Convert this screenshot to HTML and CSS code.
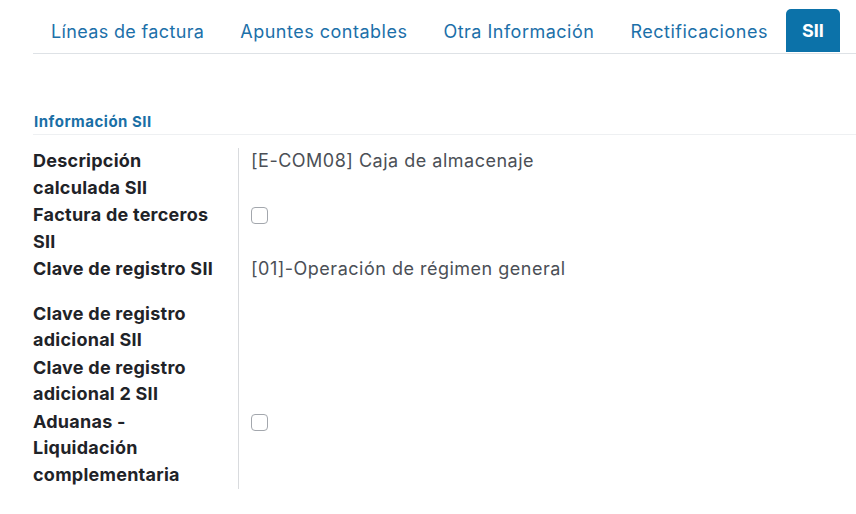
FILE: index.html
```html
<!DOCTYPE html>
<html lang="es">
<head>
<meta charset="utf-8">
<title>SII</title>
<link rel="stylesheet" href="styles.css">
</head>
<body>
<div class="sheet">
  <ul class="tabs">
    <li class="tab">Líneas de factura</li>
    <li class="tab">Apuntes contables</li>
    <li class="tab">Otra Información</li>
    <li class="tab">Rectificaciones</li>
    <li class="tab active">SII</li>
  </ul>

  <div class="group-title">Información SII</div>

  <div class="fields">
    <div class="label">Descripción calculada SII</div>
    <div class="value">[E-COM08] Caja de almacenaje</div>

    <div class="label">Factura de terceros SII</div>
    <div class="value"><span class="checkbox"></span></div>

    <div class="label">Clave de registro SII</div>
    <div class="value tall">[01]-Operación de régimen general</div>

    <div class="label">Clave de registro adicional SII</div>
    <div class="value"></div>

    <div class="label">Clave de registro adicional 2 SII</div>
    <div class="value"></div>

    <div class="label">Aduanas - Liquidación complementaria</div>
    <div class="value"><span class="checkbox"></span></div>
  </div>
</div>
</body>
</html>
```
FILE: styles.css
```css
html, body {
  margin: 0;
  padding: 0;
  background: #ffffff;
}

body {
  font-family: "Inter", "Noto Sans", sans-serif;
  font-size: 18px;
  color: #212529;
}

.sheet {
  padding: 9px 0 0 33px;
}

.tabs {
  list-style: none;
  margin: 0;
  padding: 0;
  display: flex;
  border-bottom: 1px solid #dee2e6;
}

.tab {
  height: 44px;
  display: flex;
  align-items: center;
  padding: 0 17px 0 18px;
  margin-right: 1px;
  color: #1c70a9;
  letter-spacing: 0.5px;
  white-space: nowrap;
}

.tab:first-child {
  letter-spacing: 0.35px;
}

.tab.active {
  background: #0c72a9;
  color: #ffffff;
  font-weight: 700;
  letter-spacing: 0;
  padding: 0 16px;
  border-radius: 5px 5px 0 0;
  height: 43px;
  border-bottom: 1px solid #ffffff;
  margin-bottom: -1px;
}

.group-title {
  margin-top: 58px;
  font-size: 15px;
  font-weight: 700;
  letter-spacing: 0.5px;
  line-height: 20px;
  color: #1a6fa6;
  padding: 0 0 2px 1px;
  border-bottom: 1px solid #eef0f2;
}

.fields {
  margin-top: 13px;
  display: grid;
  grid-template-columns: 206px 1fr;
  line-height: 26.5px;
}

.label {
  box-sizing: border-box;
  border-right: 1px solid #d9dbde;
  padding: 0 16px 1px 0;
  font-weight: 700;
  letter-spacing: 0.25px;
  color: #1f2328;
}

.value {
  padding-left: 12px;
  color: #4b4f56;
  letter-spacing: 0.5px;
}

.value.tall {
  padding-bottom: 18px;
}

.checkbox {
  display: inline-block;
  box-sizing: border-box;
  width: 17px;
  height: 17px;
  margin-top: 5px;
  border: 1px solid #a3a7ad;
  border-radius: 4px;
  background: #ffffff;
  vertical-align: top;
}
```
